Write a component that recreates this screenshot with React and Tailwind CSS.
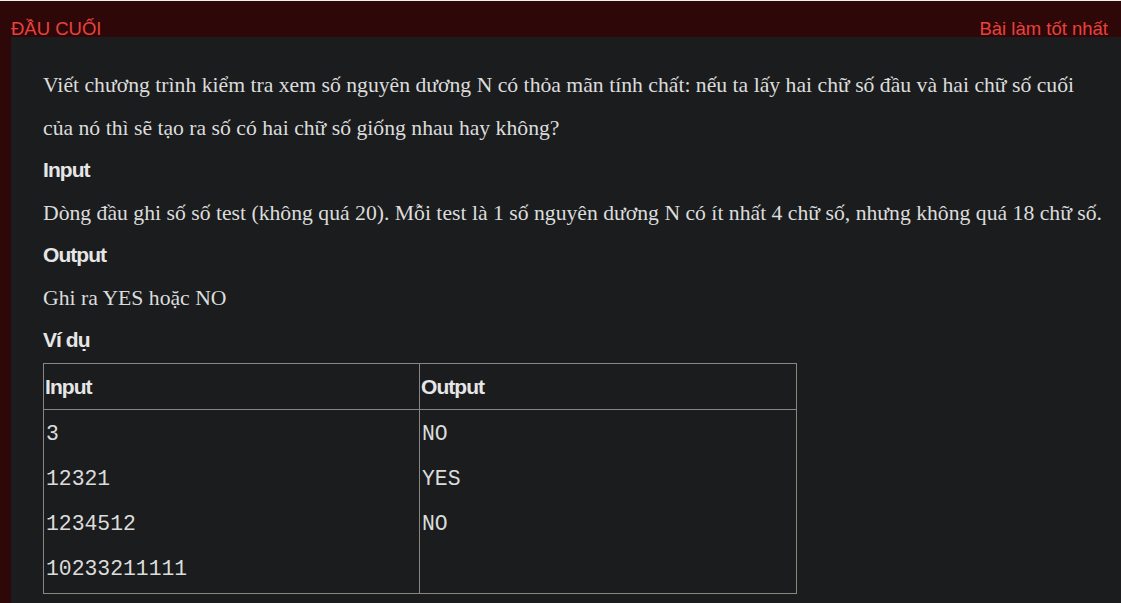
const ROWS_IN = ['3', '12321', '1234512', '10233211111'];
const ROWS_OUT = ['NO', 'YES', 'NO'];

const serif = "font-['Liberation_Serif','Times_New_Roman',serif]";
const sans = "font-['Liberation_Sans',Arial,sans-serif]";
const mono = "font-['Liberation_Mono','Courier_New',monospace]";

function Heading({ children }) {
  return (
    <h3 className={`${sans} text-[21px] font-bold tracking-[-0.045em] leading-[42.5px] text-[#e6e6e6]`}>
      {children}
    </h3>
  );
}

function Para({ children }) {
  return <p className={`${serif} text-[21.7px] leading-[42.5px] text-[#dcdcdc]`}>{children}</p>;
}

export default function App() {
  return (
    <div className="w-[1121px] h-[603px] overflow-hidden bg-[#2e0808] border-t border-[#f0f0f0]">
      <div className={`${sans} flex justify-between items-end h-[36px] pl-[11px] pr-[13px] text-[18.5px] leading-[16px] text-[#e8423f]`}>
        <span>ĐẦU CUỐI</span>
        <span>Bài làm tốt nhất</span>
      </div>
      <div className="ml-[11px] h-full bg-[#1b1c1e] pl-[32px] pt-[27px]">
        <Para>
          Viết chương trình kiểm tra xem số nguyên dương N có thỏa mãn tính chất: nếu ta lấy hai chữ số đầu và hai chữ số cuối
          <br />
          của nó thì sẽ tạo ra số có hai chữ số giống nhau hay không?
        </Para>
        <Heading>Input</Heading>
        <Para>Dòng đầu ghi số số test (không quá 20). Mỗi test là 1 số nguyên dương N có ít nhất 4 chữ số, nhưng không quá 18 chữ số.</Para>
        <Heading>Output</Heading>
        <Para>Ghi ra YES hoặc NO</Para>
        <Heading>Ví dụ</Heading>
        <table className="mt-[1.5px] w-[754px] border-collapse border border-[#8a857e]">
          <thead>
            <tr className="h-[46px]">
              <th className={`${sans} w-[376px] border border-[#8a857e] px-[1px] text-left text-[21px] font-bold tracking-[-0.045em] text-[#e6e6e6]`}>Input</th>
              <th className={`${sans} border border-[#8a857e] px-[1px] text-left text-[21px] font-bold tracking-[-0.045em] text-[#e6e6e6]`}>Output</th>
            </tr>
          </thead>
          <tbody>
            <tr>
              <td className={`${mono} border border-[#8a857e] px-[2px] pt-[2px] pb-[1px] align-top text-[21.4px] text-[#dcdcdc]`}>
                {ROWS_IN.map(r => <div key={r} className="leading-[45px]">{r}</div>)}
              </td>
              <td className={`${mono} border border-[#8a857e] px-[2px] pt-[2px] pb-[1px] align-top text-[21.4px] text-[#dcdcdc]`}>
                {ROWS_OUT.map((r, i) => <div key={i} className="leading-[45px]">{r}</div>)}
              </td>
            </tr>
          </tbody>
        </table>
      </div>
    </div>
  );
}
